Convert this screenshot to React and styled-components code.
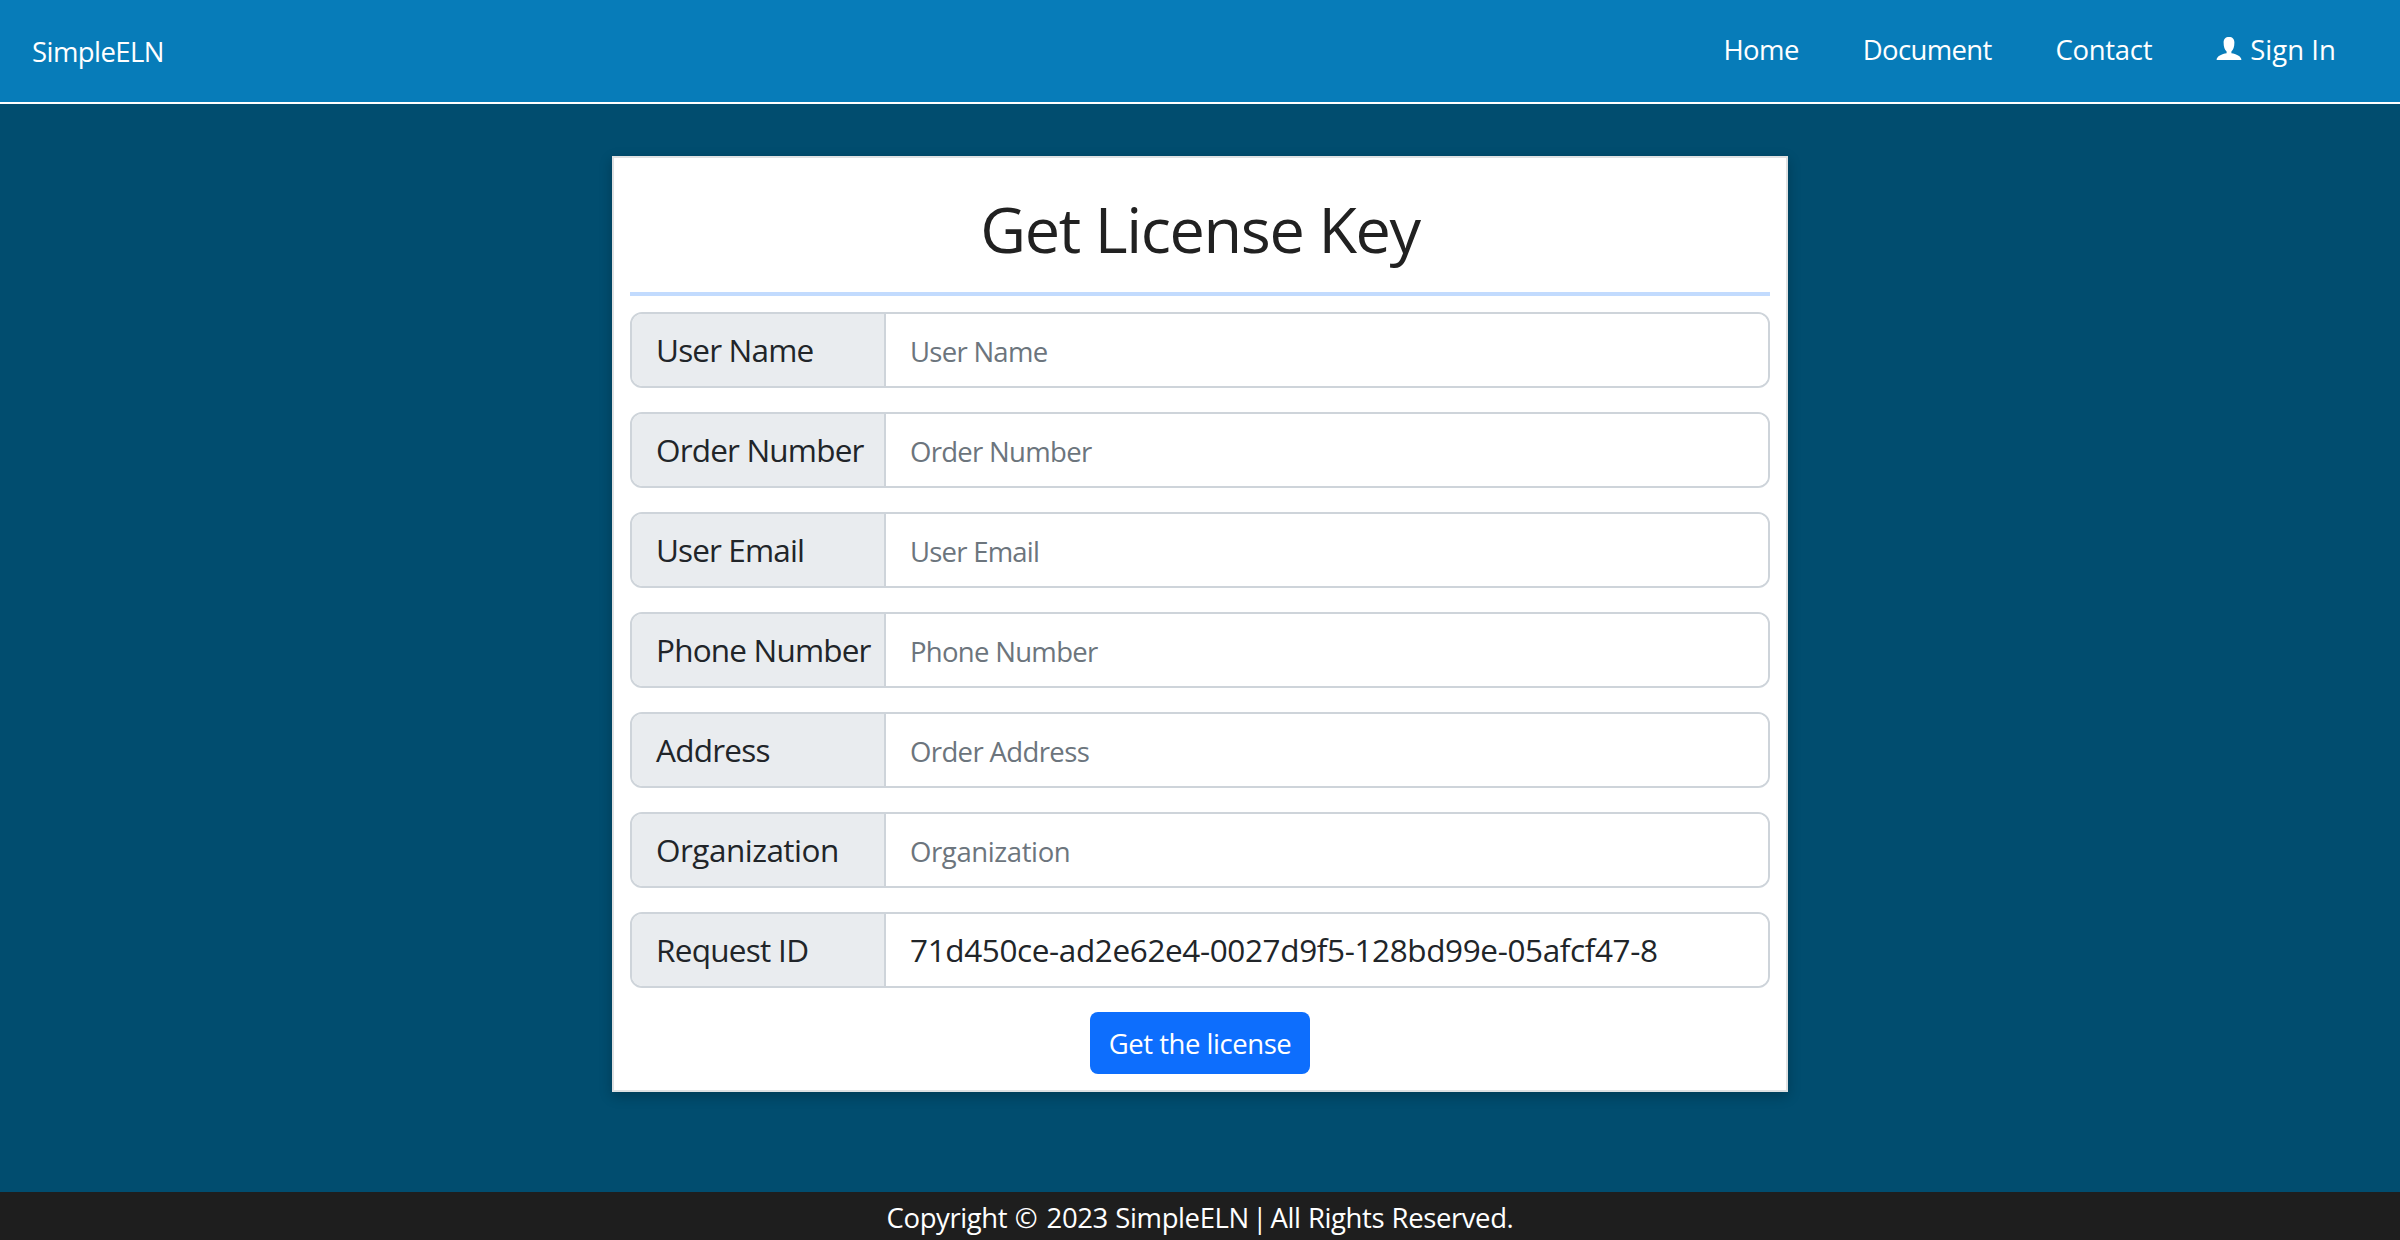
import React from "react";
import styled, { createGlobalStyle } from "styled-components";

const GlobalStyle = createGlobalStyle`
  *, *::before, *::after { box-sizing: border-box; }
  body {
    margin: 0;
    background: #014d6f;
    color: #212529;
    font-family: "Open Sans", "Noto Sans", sans-serif;
    font-size: 27.5px;
    line-height: 42px;
  }
`;

const Page = styled.div`
  display: flex;
  flex-direction: column;
  height: 1240px;
  overflow: hidden;
`;

const Navbar = styled.header`
  display: flex;
  align-items: center;
  justify-content: space-between;
  height: 104px;
  padding: 0 32px;
  background: #077cb9;
  border-bottom: 2px solid #fff;
  color: #fff;
`;

const Brand = styled.a`
  padding-top: 2px;
  letter-spacing: -0.57px;
`;

const NavLinks = styled.nav`
  display: flex;
  gap: 64px;
  padding: 0 32px 2px 0;
`;

const NavLink = styled.a`
  display: flex;
  white-space: nowrap;
  letter-spacing: ${(p) => p.$track}px;
`;

const UserIcon = styled.svg`
  width: 26px;
  height: 24px;
  margin: 8px 8px 0 0;
  fill: currentColor;
`;

const Main = styled.main`
  flex: 1;
  display: flex;
  justify-content: center;
  align-items: flex-start;
  padding-top: 52px;
`;

const Card = styled.form`
  display: flex;
  flex-direction: column;
  align-items: center;
  width: 1176px;
  height: 936px;
  padding: 0 16px;
  background: #fff;
  border: 2px solid #dfe1e2;
  box-shadow: 0 4px 12px rgba(0, 0, 0, 0.24);
`;

const Title = styled.h1`
  width: 100%;
  height: 138px;
  margin: 0 0 16px;
  padding-top: 31px;
  border-bottom: 4px solid #c2dbfe;
  color: #212121;
  font-size: 63px;
  font-weight: 400;
  line-height: 80px;
  letter-spacing: -1.38px;
  text-align: center;
`;

const Fields = styled.div`
  display: flex;
  flex-direction: column;
  gap: 24px;
  width: 100%;
`;

const Field = styled.label`
  display: flex;
  height: 76px;
  border: 2px solid #ced4da;
  border-radius: 12px;
  overflow: hidden;
`;

const FieldLabel = styled.span`
  flex: none;
  width: 254px;
  padding: 12px 0 0 24px;
  background: #e9ecef;
  border-right: 2px solid #ced4da;
  font-size: 31.5px;
  line-height: 48px;
  letter-spacing: ${(p) => p.$track}px;
  white-space: nowrap;
`;

const FieldInput = styled.input`
  flex: 1;
  min-width: 0;
  padding: 0 22px 2px 24px;
  border: 0;
  outline: 0;
  background: #fff;
  color: #212529;
  font-family: inherit;
  font-size: 31.5px;
  letter-spacing: ${(p) => p.$track}px;
  &::placeholder {
    color: #6c757d;
    font-size: 27.5px;
    opacity: 1;
  }
`;

const SubmitButton = styled.button`
  width: 220px;
  height: 62px;
  margin-top: 24px;
  padding: 1px 0 0;
  border: 0;
  border-radius: 8px;
  background: #0d6efd;
  color: #fff;
  font-family: inherit;
  font-size: 27.5px;
  letter-spacing: -0.47px;
`;

const Footer = styled.footer`
  height: 48px;
  padding-top: 5px;
  background: #1e1e1e;
  color: #fff;
  text-align: center;
  letter-spacing: -0.4px;
  word-spacing: 0.7px;
`;

const CopyrightSign = styled.span`
  letter-spacing: 1.6px;
`;

const Divider = styled.span`
  margin: 0 -4px;
`;

const fields = [
  { label: "User Name", placeholder: "User Name", labelTrack: -0.82, track: -0.72 },
  { label: "Order Number", placeholder: "Order Number", labelTrack: -0.82, track: -0.7 },
  { label: "User Email", placeholder: "User Email", labelTrack: -0.87, track: -0.77 },
  { label: "Phone Number", placeholder: "Phone Number", labelTrack: -0.82, track: -0.7 },
  { label: "Address", placeholder: "Order Address", labelTrack: -0.77, track: -0.62 },
  { label: "Organization", placeholder: "Organization", labelTrack: -0.52, track: -0.39 },
  { label: "Request ID", value: "71d450ce-ad2e62e4-0027d9f5-128bd99e-05afcf47-8", labelTrack: -0.72, track: -0.38 },
];

export default function App() {
  return (
    <>
      <GlobalStyle />
      <Page>
        <Navbar>
          <Brand>SimpleELN</Brand>
          <NavLinks>
            <NavLink $track={-0.58}>Home</NavLink>
            <NavLink $track={-0.67}>Document</NavLink>
            <NavLink $track={-0.32}>Contact</NavLink>
            <NavLink $track={0.05}>
              <UserIcon viewBox="0 0 26 24">
                <path d="M13 0C9.5 0 7.6 2 7.6 5.6C7.6 9.8 8.7 12.8 10.6 14.5V16.3C6 17 .6 19.2.6 23H25.4C25.4 19.2 20 17 15.4 16.3V14.5C17.3 12.8 18.4 9.8 18.4 5.6C18.4 2 16.5 0 13 0Z" />
              </UserIcon>
              Sign In
            </NavLink>
          </NavLinks>
        </Navbar>
        <Main>
          <Card>
            <Title>Get License Key</Title>
            <Fields>
              {fields.map((f) => (
                <Field key={f.label}>
                  <FieldLabel $track={f.labelTrack}>{f.label}</FieldLabel>
                  <FieldInput $track={f.track} placeholder={f.placeholder} defaultValue={f.value} />
                </Field>
              ))}
            </Fields>
            <SubmitButton type="button">Get the license</SubmitButton>
          </Card>
        </Main>
        <Footer>
          Copyright <CopyrightSign>©</CopyrightSign> 2023 SimpleELN <Divider>|</Divider> All Rights Reserved.
        </Footer>
      </Page>
    </>
  );
}
